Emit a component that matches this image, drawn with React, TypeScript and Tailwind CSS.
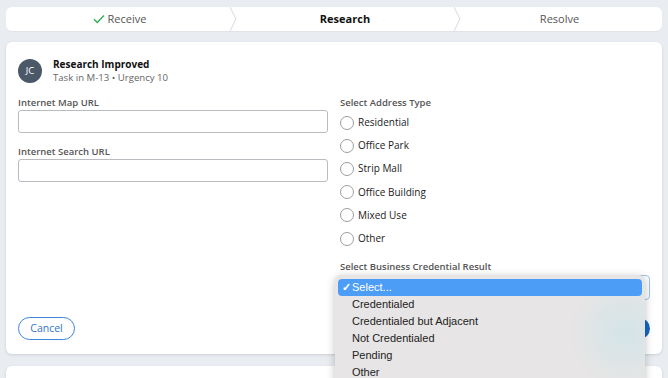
import React from "react";

const radios = ["Residential", "Office Park", "Strip Mall", "Office Building", "Mixed Use", "Other"];
const options = ["Credentialed", "Credentialed but Adjacent", "Not Credentialed", "Pending", "Other"];

function Chevron() {
  return (
    <svg className="absolute right-[-4px] top-0 h-[24px] w-[8px]" viewBox="0 0 8 24" fill="none">
      <path d="M1 0 L7 12 L1 24" stroke="#d5d9de" strokeWidth="1" />
    </svg>
  );
}

export default function App() {
  return (
    <div
      className="min-h-[378px] h-[378px] overflow-hidden bg-[#e9edf1] px-[6px] pt-[7px]"
      style={{ fontFamily: '"Open Sans", sans-serif' }}
    >
      {/* Stepper */}
      <div className="flex h-[24px] rounded-[6px] bg-white text-[11px] shadow-[0_1px_1px_rgba(0,0,0,0.04)]">
        <div className="relative flex w-[227px] items-center justify-center gap-[3px] text-[#555]">
          <svg width="12" height="10" viewBox="0 0 12 10" fill="none">
            <path d="M1 5.2 L4.3 8.5 L11 1.5" stroke="#2eaa55" strokeWidth="1.3" />
          </svg>
          <span>Receive</span>
          <Chevron />
        </div>
        <div className="relative flex w-[224px] items-center justify-center font-bold text-[#111]">
          Research
          <Chevron />
        </div>
        <div className="flex flex-1 items-center justify-center text-[#555]">Resolve</div>
      </div>

      {/* Card */}
      <div className="mt-[11px] h-[312px] rounded-[6px] bg-white px-[12px] pt-[16px] shadow-[0_1px_3px_rgba(0,0,0,0.12)]">
        <div className="flex items-center gap-[11px]">
          <div className="flex h-[24px] w-[24px] items-center justify-center rounded-full bg-[#4a5868] text-[9.5px] text-white">
            JC
          </div>
          <div className="flex flex-col">
            <div className="text-[10px] font-bold leading-[13px] text-[#111]">Research Improved</div>
            <div className="text-[9.6px] leading-[13px] text-[#666]">Task in M-13 • Urgency 10</div>
          </div>
        </div>

        <div className="mt-[12px] grid grid-cols-2 gap-x-[12px]">
          <div className="flex flex-col">
            <label className="text-[9.5px] font-semibold leading-[14px] text-[#555]">Internet Map URL</label>
            <div className="h-[23px] rounded-[3px] border border-[#b8bcc1] bg-white" />
            <label className="mt-[12px] text-[9.5px] font-semibold leading-[14px] text-[#555]">Internet Search URL</label>
            <div className="h-[23px] rounded-[3px] border border-[#b8bcc1] bg-white" />
          </div>
          <div className="flex flex-col">
            <label className="text-[9.5px] font-semibold leading-[14px] text-[#555]">Select Address Type</label>
            <div className="mt-[1px] flex flex-col">
              {radios.map((r) => (
                <div key={r} className="flex h-[23.2px] items-center gap-[4px]">
                  <div className="h-[14px] w-[14px] rounded-full border border-[#9a9ea3] bg-white" />
                  <span className="text-[10px] text-[#222]">{r}</span>
                </div>
              ))}
            </div>
            <label className="mt-[10px] text-[9.5px] font-semibold leading-[14px] text-[#555]">
              Select Business Credential Result
            </label>
            <div className="relative mt-[1px] h-[25px]">
              <div className="ml-[-2px] h-[25px] rounded-[4px] border border-[#9cc3ee] bg-white" />
            </div>
          </div>
        </div>

        <div className="mt-[17px] flex items-center justify-between">
          <button className="h-[23px] w-[57px] rounded-full border border-[#3d86de] text-[10.5px] text-[#2f74c8]">
            Cancel
          </button>
          <button className="h-[21px] w-[64px] rounded-full bg-[#1668c4] text-[10.5px] font-semibold text-white">
            Submit
          </button>
        </div>
      </div>

      {/* Second card */}
      <div className="mt-[12px] h-[60px] rounded-[6px] bg-white shadow-[0_1px_3px_rgba(0,0,0,0.12)]" />

      {/* Dropdown menu overlay */}
      <div
        className="absolute left-[335px] top-[275px] h-[120px] w-[310px] rounded-[6px] bg-[#e7e5e5] px-[3px] pt-[4px] shadow-[0_2px_8px_rgba(0,0,0,0.25)]"
        style={{
          fontFamily: '"Liberation Sans", Arial, sans-serif',
          backgroundImage: "radial-gradient(circle at 290px 58px, rgba(205,228,232,0.75) 0px, rgba(231,229,229,0) 55px)",
        }}
      >
        <div className="relative flex h-[17px] items-center rounded-[4px] bg-[#4c9df6] pl-[14px] text-[11px] text-white">
          <span className="absolute left-[4px] text-[11px] font-bold">✓</span>
          Select...
        </div>
        {options.map((o) => (
          <div key={o} className="flex h-[17px] items-center pl-[14px] text-[11px] text-[#222]">
            {o}
          </div>
        ))}
      </div>
    </div>
  );
}
